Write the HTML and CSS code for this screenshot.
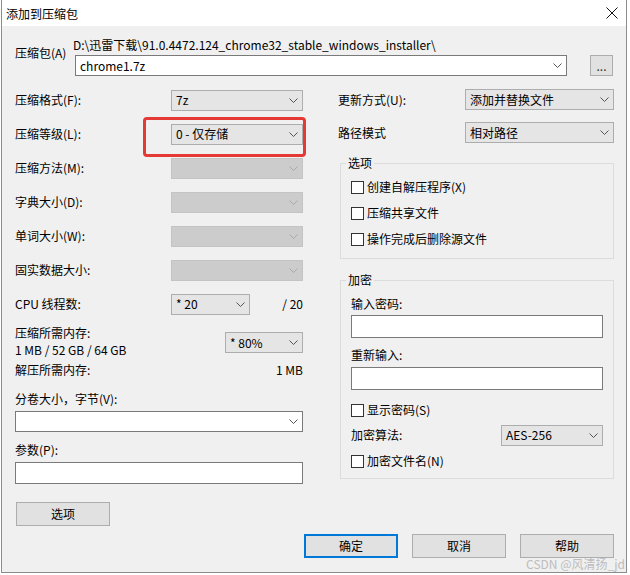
FILE: index.html
```html
<!DOCTYPE html>
<html lang="zh-CN">
<head>
<meta charset="utf-8">
<title>添加到压缩包</title>
<link rel="stylesheet" href="styles.css">
</head>
<body>
<div class="window">
  <div class="titlebar">
    <span class="title">添加到压缩包</span>
    <svg class="close" viewBox="0 0 12 12"><path d="M0.5 0.5 L11.5 11.5 M11.5 0.5 L0.5 11.5"/></svg>
  </div>
  <div class="content">
    <div class="archive">
      <div class="archive-label">压缩包(A)</div>
      <div class="archive-main">
        <div class="path">D:\迅雷下载\91.0.4472.124_chrome32_stable_windows_installer\</div>
        <div class="archive-row">
          <div class="select white file"><span>chrome1.7z</span><svg class="chev" viewBox="0 0 9 5"><polyline points="0.5,0.5 4.5,4.5 8.5,0.5"/></svg></div>
          <div class="btn dots">...</div>
        </div>
      </div>
    </div>

    <div class="main">
      <div class="left">
        <div class="row"><span>压缩格式(F):</span><div class="select"><span>7z</span><svg class="chev" viewBox="0 0 9 5"><polyline points="0.5,0.5 4.5,4.5 8.5,0.5"/></svg></div></div>
        <div class="row"><span>压缩等级(L):</span><div class="select"><span>0 - 仅存储</span><svg class="chev" viewBox="0 0 9 5"><polyline points="0.5,0.5 4.5,4.5 8.5,0.5"/></svg></div><div class="highlight"></div></div>
        <div class="row"><span>压缩方法(M):</span><div class="select disabled"><span></span><svg class="chev" viewBox="0 0 9 5"><polyline points="0.5,0.5 4.5,4.5 8.5,0.5"/></svg></div></div>
        <div class="row"><span>字典大小(D):</span><div class="select disabled"><span></span><svg class="chev" viewBox="0 0 9 5"><polyline points="0.5,0.5 4.5,4.5 8.5,0.5"/></svg></div></div>
        <div class="row"><span>单词大小(W):</span><div class="select disabled"><span></span><svg class="chev" viewBox="0 0 9 5"><polyline points="0.5,0.5 4.5,4.5 8.5,0.5"/></svg></div></div>
        <div class="row"><span>固实数据大小:</span><div class="select disabled"><span></span><svg class="chev" viewBox="0 0 9 5"><polyline points="0.5,0.5 4.5,4.5 8.5,0.5"/></svg></div></div>
        <div class="row cpu"><span>CPU 线程数:</span><div class="select"><span>* 20</span><svg class="chev" viewBox="0 0 9 5"><polyline points="0.5,0.5 4.5,4.5 8.5,0.5"/></svg></div><span class="total">/ 20</span></div>
        <div class="mem">
          <div class="mem-text">
            <div class="mem-line">压缩所需内存:</div>
            <div class="mem-line">1 MB / 52 GB / 64 GB</div>
          </div>
          <div class="select"><span>* 80%</span><svg class="chev" viewBox="0 0 9 5"><polyline points="0.5,0.5 4.5,4.5 8.5,0.5"/></svg></div>
        </div>
        <div class="unzip"><span>解压所需内存:</span><span>1 MB</span></div>
        <div class="field-label split-label">分卷大小，字节(V):</div>
        <div class="select white split"><span></span><svg class="chev" viewBox="0 0 9 5"><polyline points="0.5,0.5 4.5,4.5 8.5,0.5"/></svg></div>
        <div class="field-label param-label">参数(P):</div>
        <div class="input param"></div>
        <div class="btn opts">选项</div>
      </div>

      <div class="right">
        <div class="rrow"><span>更新方式(U):</span><div class="select"><span>添加并替换文件</span><svg class="chev" viewBox="0 0 9 5"><polyline points="0.5,0.5 4.5,4.5 8.5,0.5"/></svg></div></div>
        <div class="rrow"><span>路径模式</span><div class="select"><span>相对路径</span><svg class="chev" viewBox="0 0 9 5"><polyline points="0.5,0.5 4.5,4.5 8.5,0.5"/></svg></div></div>
        <fieldset class="group options">
          <legend>选项</legend>
          <div class="check"><span class="box"></span><span>创建自解压程序(X)</span></div>
          <div class="check"><span class="box"></span><span>压缩共享文件</span></div>
          <div class="check"><span class="box"></span><span>操作完成后删除源文件</span></div>
        </fieldset>
        <fieldset class="group crypt">
          <legend>加密</legend>
          <div class="pw-label">输入密码:</div>
          <div class="input pw"></div>
          <div class="pw-label again">重新输入:</div>
          <div class="input pw pw2"></div>
          <div class="check show"><span class="box"></span><span>显示密码(S)</span></div>
          <div class="algo"><span>加密算法:</span><div class="select"><span>AES-256</span><svg class="chev" viewBox="0 0 9 5"><polyline points="0.5,0.5 4.5,4.5 8.5,0.5"/></svg></div></div>
          <div class="check names"><span class="box"></span><span>加密文件名(N)</span></div>
        </fieldset>
      </div>
    </div>

    <div class="buttons">
      <div class="btn default">确定</div>
      <div class="btn">取消</div>
      <div class="btn">帮助</div>
    </div>
  </div>
  <div class="watermark">CSDN @风清扬_jd</div>
</div>
</body>
</html>
```

FILE: styles.css
```css
* { box-sizing: border-box; }
html, body { margin: 0; padding: 0; background: #ffffff; }
body {
  font-family: "Noto Sans CJK SC", "Noto Sans", sans-serif;
  font-size: 12px;
  line-height: 16px;
  color: #000;
}
.window {
  position: relative;
  margin-left: 1px;
  width: 626px;
  height: 573px;
  background: #f0f0f0;
  border: 1px solid #8c8c8c;
  border-top: none;
}
.titlebar {
  height: 26px;
  background: #fff;
  display: flex;
  align-items: center;
  justify-content: space-between;
  padding: 0 8px 0 4px;
}
.title { font-size: 12px; padding-top: 1px; }
.close { width: 12px; height: 12px; fill: none; stroke: #111; stroke-width: 1; }
.content { padding: 11px 12px 0 13px; }

.archive { display: flex; }
.archive-label { width: 58px; flex: none; padding-top: 8px; }
.archive-main { flex: 1; min-width: 0; }
.path { height: 16px; white-space: nowrap; }
.archive-row { display: flex; margin-top: 2px; align-items: center; }
.select.file { margin-left: 2px; width: 492px; }
.dots { margin-left: auto; margin-right: 1px; width: 23px; height: 21px; line-height: 14px; color: #333; }

.select {
  height: 21px;
  background: #e5e5e5;
  border: 1px solid #adadad;
  display: flex;
  align-items: center;
  justify-content: space-between;
  padding: 0 4px 0 4px;
  white-space: nowrap;
}
.select.white { background: #fff; border-color: #7a7a7a; }
.select.disabled { background: #cccccc; border-color: #c4c4c4; }
.select.disabled .chev { stroke: #a8a8a8; }
.chev { width: 9px; height: 5px; fill: none; stroke: #555; stroke-width: 1; flex: none; }

.input { background: #fff; border: 1px solid #7a7a7a; }

.btn {
  background: #e1e1e1;
  border: 1px solid #adadad;
  display: flex;
  align-items: center;
  justify-content: center;
}
.btn.default { border: 2px solid #0078d7; }

.main {
  display: grid;
  grid-template-columns: 288px 276px;
  column-gap: 35px;
  margin-top: 7px;
  align-items: start;
}
.left { display: flex; flex-direction: column; }
.row {
  position: relative;
  display: grid;
  grid-template-columns: 156px 132px;
  height: 34px;
  align-items: center;
}
.row.cpu { grid-template-columns: 156px 79px 1fr; }
.total { text-align: right; }
.highlight {
  position: absolute;
  left: 128px;
  top: 0;
  width: 163px;
  height: 40px;
  border: 3px solid #e53935;
  border-radius: 4px;
}
.mem { display: flex; justify-content: space-between; margin-top: 3px; }
.mem-line { line-height: 17px; height: 17px; }
.mem .select { width: 78px; margin-top: 8px; }
.unzip { display: flex; justify-content: space-between; margin-top: 4px; }
.split-label { margin-top: 13px; }
.select.split { margin-top: 4px; width: 288px; }
.param-label { margin-top: 10px; }
.input.param { margin-top: 4px; height: 22px; }
.btn.opts { margin-top: 18px; margin-left: 1px; width: 94px; height: 24px; }

.right { display: flex; flex-direction: column; }
.rrow {
  display: grid;
  grid-template-columns: 127px 149px;
  height: 33px;
  align-items: center;
}
.group {
  margin: 0 0 0 2px;
  min-width: 0;
  width: 274px;
  border: 1px solid #dcdcdc;
}
.group legend { padding: 0 2px; margin-left: -5px; line-height: 16px; }
.options { margin-top: 6px; padding: 3px 10px 6px 10px; }
.crypt { margin-top: 13px; padding: 8px 10px 4px 10px; }
.check { display: flex; align-items: center; height: 26px; }
.box {
  width: 13px;
  height: 13px;
  background: #fff;
  border: 1px solid #333;
  margin-right: 3px;
  flex: none;
}
.input.pw { margin-top: 3px; height: 23px; }
.input.pw2 { margin-top: 4px; }
.pw-label.again { margin-top: 9px; }
.check.show { margin-top: 7px; }
.algo { display: flex; justify-content: space-between; align-items: center; height: 24px; }
.algo .select { width: 102px; }
.check.names { margin-top: 1px; }

.buttons {
  display: flex;
  justify-content: flex-end;
  gap: 14px;
  margin-top: 8px;
}
.buttons .btn { width: 94px; height: 24px; }

.watermark {
  position: absolute;
  right: 1px;
  bottom: 0;
  color: #bdbdbd;
  font-size: 12px;
  line-height: 16px;
}
```
